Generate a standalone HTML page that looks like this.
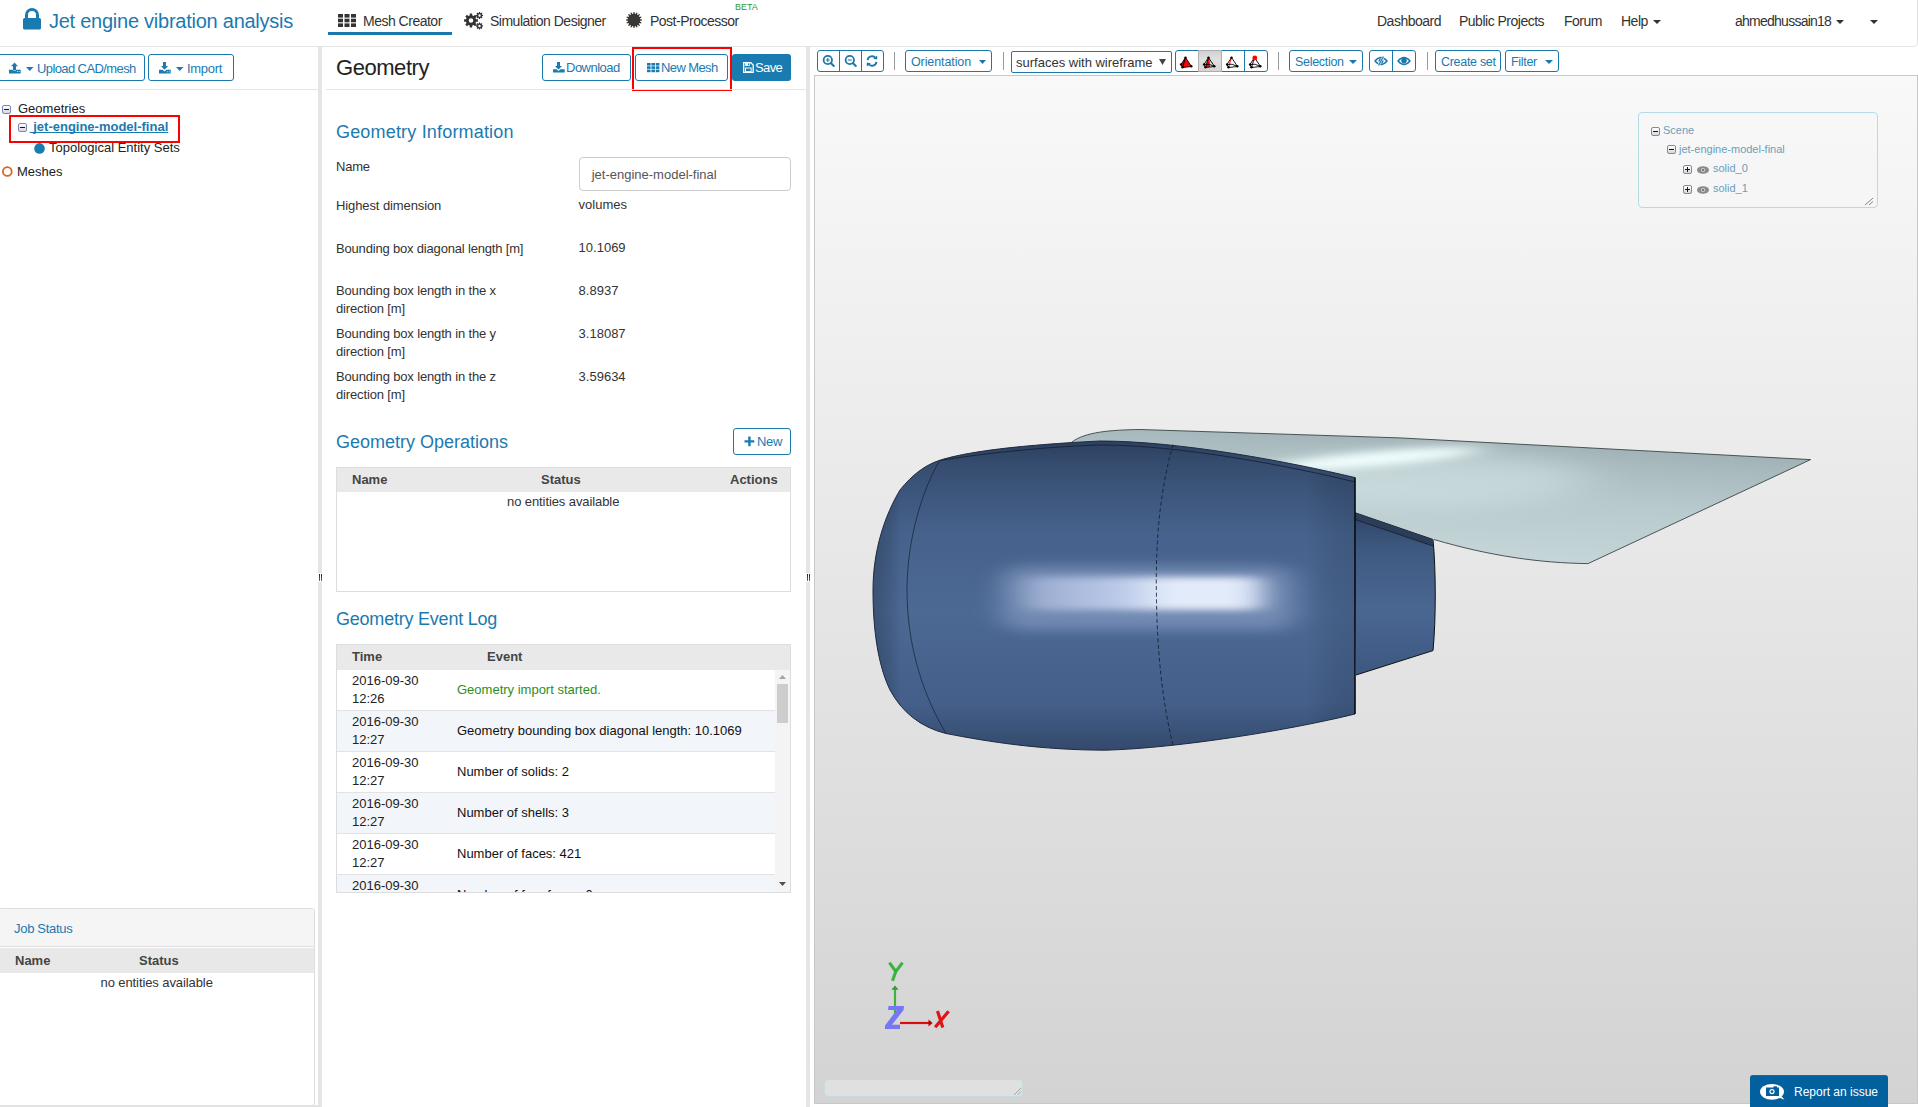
<!DOCTYPE html>
<html><head><meta charset="utf-8">
<style>
*{box-sizing:border-box;margin:0;padding:0}
html,body{width:1918px;height:1107px;overflow:hidden;background:#fff;font-family:"Liberation Sans",sans-serif;color:#333}
.a{position:absolute}
.t{position:absolute;white-space:nowrap;line-height:1}
.btn{position:absolute;border:1px solid #1b78ad;border-radius:3px;background:#fff}
.blue{color:#1b7ab0}
svg{position:absolute;overflow:visible}
.tb,.tbp{width:9px;height:9px;border:1px solid #7b84c4;border-radius:2px;background:linear-gradient(#fff,#d8d8d8)}
.tb::after,.tbp::after{content:"";position:absolute;left:1px;top:3px;width:5px;height:1px;background:#00c}
.tbp::before{content:"";position:absolute;left:3px;top:1px;width:1px;height:5px;background:#00c}
</style></head><body>

<!-- NAVBAR -->
<div class="a" style="left:-4px;top:-4px;width:1922px;height:51px;border:1px solid #e3e3e3;border-radius:4px;background:#fff"></div>
<svg style="left:23px;top:8px" width="18" height="22" viewBox="0 0 18 22"><path d="M2 10.5V7A7 7 0 0 1 16 7V10.5H13V7A4 4 0 0 0 5 7V10.5Z" fill="#1a7bb0"/><rect x="0" y="10" width="18" height="11.6" rx="1.5" fill="#1a7bb0"/></svg>
<div class="t blue" style="left:49px;top:11px;font-size:20px;letter-spacing:-0.25px;color:#1b7ab0">Jet engine vibration analysis</div>

<!-- app tabs -->
<svg style="left:338px;top:14px" width="18" height="13" viewBox="0 0 18 13"><g fill="#333"><rect x="0" y="0" width="5" height="3.6"/><rect x="6.5" y="0" width="5" height="3.6"/><rect x="13" y="0" width="5" height="3.6"/><rect x="0" y="4.7" width="5" height="3.6"/><rect x="6.5" y="4.7" width="5" height="3.6"/><rect x="13" y="4.7" width="5" height="3.6"/><rect x="0" y="9.4" width="5" height="3.6"/><rect x="6.5" y="9.4" width="5" height="3.6"/><rect x="13" y="9.4" width="5" height="3.6"/></g></svg>
<div class="t" style="left:363px;top:14px;font-size:14px;letter-spacing:-0.5px;color:#333">Mesh Creator</div>
<div class="a" style="left:328px;top:32px;width:124px;height:3px;background:#1b78ad"></div>

<svg style="left:464px;top:12px" width="20" height="17" viewBox="0 0 20 17"><path fill-rule="evenodd" fill="#333" d="M12.03 7.17 L13.91 7.35 L13.91 9.65 L12.03 9.83 L11.50 11.11 L12.70 12.57 L11.07 14.20 L9.61 13.00 L8.33 13.53 L8.15 15.41 L5.85 15.41 L5.67 13.53 L4.39 13.00 L2.93 14.20 L1.30 12.57 L2.50 11.11 L1.97 9.83 L0.09 9.65 L0.09 7.35 L1.97 7.17 L2.50 5.89 L1.30 4.43 L2.93 2.80 L4.39 4.00 L5.67 3.47 L5.85 1.59 L8.15 1.59 L8.33 3.47 L9.61 4.00 L11.07 2.80 L12.70 4.43 L11.50 5.89Z M9.30 8.50 A2.3 2.3 0 1 0 4.70 8.50 A2.3 2.3 0 1 0 9.30 8.50Z M18.01 2.83 L19.05 2.91 L19.05 4.09 L18.01 4.17 L17.75 4.81 L18.43 5.59 L17.59 6.43 L16.81 5.75 L16.17 6.01 L16.09 7.05 L14.91 7.05 L14.83 6.01 L14.19 5.75 L13.41 6.43 L12.57 5.59 L13.25 4.81 L12.99 4.17 L11.95 4.09 L11.95 2.91 L12.99 2.83 L13.25 2.19 L12.57 1.41 L13.41 0.57 L14.19 1.25 L14.83 0.99 L14.91 -0.05 L16.09 -0.05 L16.17 0.99 L16.81 1.25 L17.59 0.57 L18.43 1.41 L17.75 2.19Z M16.70 3.50 A1.2 1.2 0 1 0 14.30 3.50 A1.2 1.2 0 1 0 16.70 3.50Z M18.01 13.33 L19.05 13.41 L19.05 14.59 L18.01 14.67 L17.75 15.31 L18.43 16.09 L17.59 16.93 L16.81 16.25 L16.17 16.51 L16.09 17.55 L14.91 17.55 L14.83 16.51 L14.19 16.25 L13.41 16.93 L12.57 16.09 L13.25 15.31 L12.99 14.67 L11.95 14.59 L11.95 13.41 L12.99 13.33 L13.25 12.69 L12.57 11.91 L13.41 11.07 L14.19 11.75 L14.83 11.49 L14.91 10.45 L16.09 10.45 L16.17 11.49 L16.81 11.75 L17.59 11.07 L18.43 11.91 L17.75 12.69Z M16.70 14.00 A1.2 1.2 0 1 0 14.30 14.00 A1.2 1.2 0 1 0 16.70 14.00Z"/></svg>
<div class="t" style="left:490px;top:14px;font-size:14px;letter-spacing:-0.5px;color:#333">Simulation Designer</div>

<svg style="left:626px;top:12px" width="17" height="17" viewBox="0 0 17 17"><path fill="#3a3633" d="M14.25 7.25 L15.98 7.42 L15.98 8.58 L14.25 8.75 L14.07 9.70 L15.59 10.52 L15.15 11.59 L13.49 11.09 L12.96 11.89 L14.05 13.23 L13.23 14.05 L11.89 12.96 L11.09 13.49 L11.59 15.15 L10.52 15.59 L9.70 14.07 L8.75 14.25 L8.58 15.98 L7.42 15.98 L7.25 14.25 L6.30 14.07 L5.48 15.59 L4.41 15.15 L4.91 13.49 L4.11 12.96 L2.77 14.05 L1.95 13.23 L3.04 11.89 L2.51 11.09 L0.85 11.59 L0.41 10.52 L1.93 9.70 L1.75 8.75 L0.02 8.58 L0.02 7.42 L1.75 7.25 L1.93 6.30 L0.41 5.48 L0.85 4.41 L2.51 4.91 L3.04 4.11 L1.95 2.77 L2.77 1.95 L4.11 3.04 L4.91 2.51 L4.41 0.85 L5.48 0.41 L6.30 1.93 L7.25 1.75 L7.42 0.02 L8.58 0.02 L8.75 1.75 L9.70 1.93 L10.52 0.41 L11.59 0.85 L11.09 2.51 L11.89 3.04 L13.23 1.95 L14.05 2.77 L12.96 4.11 L13.49 4.91 L15.15 4.41 L15.59 5.48 L14.07 6.30Z"/></svg>
<div class="t" style="left:650px;top:14px;font-size:14px;letter-spacing:-0.5px;color:#333">Post-Processor</div>
<div class="t" style="left:735px;top:3px;font-size:9px;color:#2e9a2e">BETA</div>

<div class="t" style="left:1377px;top:14px;font-size:14px;letter-spacing:-0.5px">Dashboard</div>
<div class="t" style="left:1459px;top:14px;font-size:14px;letter-spacing:-0.5px">Public Projects</div>
<div class="t" style="left:1564px;top:14px;font-size:14px;letter-spacing:-0.5px">Forum</div>
<div class="t" style="left:1621px;top:14px;font-size:14px;letter-spacing:-0.5px">Help</div>
<svg style="left:1653px;top:20px" width="8" height="4"><path d="M0 0h8L4 4z" fill="#333"/></svg>
<div class="t" style="left:1735px;top:14px;font-size:14px;letter-spacing:-0.75px">ahmedhussain18</div>
<svg style="left:1836px;top:20px" width="8" height="4"><path d="M0 0h8L4 4z" fill="#333"/></svg>
<svg style="left:1870px;top:20px" width="8" height="4"><path d="M0 0h8L4 4z" fill="#333"/></svg>

<!-- SPLITTERS -->
<div class="a" style="left:318px;top:47px;width:4px;height:1060px;background:#e5e5e5"></div>
<div class="a" style="left:806px;top:47px;width:4px;height:1060px;background:#e5e5e5"></div>

<div class="a" style="left:318px;top:573px;width:4px;height:9px;background:#fff"></div>
<div class="a" style="left:319px;top:574px;width:1px;height:7px;background:linear-gradient(#222,#666)"></div>
<div class="a" style="left:321px;top:574px;width:1px;height:7px;background:linear-gradient(#222,#666)"></div>
<div class="a" style="left:806px;top:573px;width:4px;height:9px;background:#fff"></div>
<div class="a" style="left:807px;top:574px;width:1px;height:7px;background:linear-gradient(#222,#666)"></div>
<div class="a" style="left:809px;top:574px;width:1px;height:7px;background:linear-gradient(#222,#666)"></div>
<!-- LEFT PANEL -->
<div class="btn" style="left:-3px;top:54px;width:148px;height:27px"></div>
<div class="t blue" style="left:37px;top:61.5px;font-size:13px;letter-spacing:-0.6px">Upload CAD/mesh</div>
<div class="btn" style="left:148px;top:54px;width:86px;height:27px"></div>
<div class="t blue" style="left:187px;top:61.5px;font-size:13px;letter-spacing:-0.3px">Import</div>
<div class="a" style="left:0;top:89px;width:318px;height:1px;background:#e6e6e6"></div>

<div class="t" style="left:18px;top:102px;font-size:13px;color:#222">Geometries</div>
<div class="t" style="left:29.6px;top:120px;font-size:13px;font-weight:bold;color:#1b7ab0;text-decoration:underline;text-decoration-skip-ink:none">&nbsp;jet-engine-model-final</div>
<div class="t" style="left:49px;top:140.7px;font-size:13px;color:#222">Topological Entity Sets</div>
<div class="t" style="left:17px;top:165px;font-size:13px;color:#222">Meshes</div>
<div class="a" style="left:9px;top:115px;width:171px;height:28px;border:2px solid #ff0000"></div>

<!-- Job status -->
<div class="a" style="left:-2px;top:908px;width:317px;height:198px;border:1px solid #ddd;border-radius:3px;background:#fff"></div>
<div class="a" style="left:0;top:1105px;width:318px;height:2px;background:#e2e2e2"></div>
<div class="a" style="left:-1px;top:909px;width:315px;height:38px;background:#f5f5f5;border-bottom:1px solid #ddd"></div>
<div class="t blue" style="left:14px;top:922px;font-size:13px;letter-spacing:-0.3px">Job Status</div>
<div class="a" style="left:0;top:948px;width:314px;height:25px;background:#e8e8e8"></div>
<div class="t" style="left:15px;top:953.5px;font-size:13px;font-weight:bold;color:#444">Name</div>
<div class="t" style="left:139px;top:953.5px;font-size:13px;font-weight:bold;color:#444">Status</div>
<div class="t" style="left:100.5px;top:975.6px;font-size:13px;color:#333;letter-spacing:-0.09px">no entities available</div>

<!-- MIDDLE PANEL -->
<div class="t" style="left:336px;top:57px;font-size:22px;letter-spacing:-0.45px;color:#222">Geometry</div>
<div class="btn" style="left:542px;top:54px;width:89px;height:27px"></div>
<div class="t blue" style="left:566px;top:61px;font-size:13px;letter-spacing:-0.5px">Download</div>
<div class="btn" style="left:635px;top:54px;width:93px;height:27px"></div>
<div class="t blue" style="left:661px;top:61px;font-size:13px;letter-spacing:-0.6px">New Mesh</div>
<div class="a" style="left:632px;top:47px;width:100px;height:44px;border:2px solid #ff0000"></div>
<div class="a" style="left:732px;top:54px;width:59px;height:27px;background:#1a7bb0;border-radius:3px"></div>
<div class="t" style="left:755px;top:61px;font-size:13px;letter-spacing:-0.6px;color:#fff">Save</div>
<div class="a" style="left:326px;top:89px;width:480px;height:1px;background:#e6e6e6"></div>

<div class="t blue" style="left:336px;top:123px;font-size:18px;letter-spacing:0.18px">Geometry Information</div>
<div class="t" style="left:336px;top:160.3px;font-size:13px;letter-spacing:-0.2px">Name</div>
<div class="a" style="left:579px;top:157px;width:212px;height:34px;border:1px solid #ccc;border-radius:4px"></div>
<div class="t" style="left:591.7px;top:168px;font-size:13px;color:#555">jet-engine-model-final</div>
<div class="t" style="left:336px;top:199px;font-size:13px;letter-spacing:-0.1px">Highest dimension</div>
<div class="t" style="left:578.6px;top:198px;font-size:13px">volumes</div>
<div class="t" style="left:336px;top:241.6px;font-size:13px;letter-spacing:-0.18px">Bounding box diagonal length [m]</div>
<div class="t" style="left:578.6px;top:241px;font-size:13px">10.1069</div>
<div class="t" style="left:336px;top:282.2px;font-size:13px;line-height:17.8px;white-space:normal;width:200px;letter-spacing:-0.15px">Bounding box length in the x<br>direction [m]</div>
<div class="t" style="left:578.6px;top:284px;font-size:13px">8.8937</div>
<div class="t" style="left:336px;top:325.2px;font-size:13px;line-height:17.8px;white-space:normal;width:200px;letter-spacing:-0.15px">Bounding box length in the y<br>direction [m]</div>
<div class="t" style="left:578.6px;top:327px;font-size:13px">3.18087</div>
<div class="t" style="left:336px;top:368.2px;font-size:13px;line-height:17.8px;white-space:normal;width:200px;letter-spacing:-0.15px">Bounding box length in the z<br>direction [m]</div>
<div class="t" style="left:578.6px;top:370px;font-size:13px">3.59634</div>

<div class="t blue" style="left:336px;top:432.7px;font-size:18px">Geometry Operations</div>
<div class="btn" style="left:733px;top:428px;width:58px;height:27px"></div>
<div class="t blue" style="left:757px;top:435px;font-size:13px;letter-spacing:-0.3px">New</div>
<div class="a" style="left:336px;top:467px;width:455px;height:125px;border:1px solid #ddd"></div>
<div class="a" style="left:337px;top:468px;width:453px;height:24px;background:#e9e9e9"></div>
<div class="t" style="left:352px;top:472.9px;font-size:13px;font-weight:bold;color:#444">Name</div>
<div class="t" style="left:541px;top:472.9px;font-size:13px;font-weight:bold;color:#444">Status</div>
<div class="t" style="left:730px;top:472.9px;font-size:13px;font-weight:bold;color:#444">Actions</div>
<div class="t" style="left:507px;top:495px;font-size:13px;letter-spacing:-0.09px">no entities available</div>

<div class="t blue" style="left:336px;top:610px;font-size:18px;letter-spacing:-0.22px">Geometry Event Log</div>
<div class="a" style="left:336px;top:644px;width:455px;height:249px;border:1px solid #ddd"></div>
<div class="a" style="left:337px;top:645px;width:453px;height:25px;background:#e9e9e9"></div>
<div class="t" style="left:352px;top:650px;font-size:13px;font-weight:bold;color:#444">Time</div>
<div class="t" style="left:487px;top:650px;font-size:13px;font-weight:bold;color:#444">Event</div>

<div class="a" style="left:337px;top:670px;width:438px;height:222px;overflow:hidden">
<div class="a" style="left:0;top:0px;width:438px;height:40px;background:#fff;border-top:0"></div>
<div class="t" style="left:15px;top:4.3px;font-size:13px;color:#222">2016-09-30</div>
<div class="t" style="left:15px;top:22.0px;font-size:13px;color:#222">12:26</div>
<div class="t" style="left:120px;top:13.0px;font-size:13px;color:#2a8f22">Geometry import started.</div>
<div class="a" style="left:0;top:40px;width:438px;height:41px;background:#f2f5f9;border-top:1px solid #e3e3e3"></div>
<div class="t" style="left:15px;top:45.3px;font-size:13px;color:#222">2016-09-30</div>
<div class="t" style="left:15px;top:63.0px;font-size:13px;color:#222">12:27</div>
<div class="t" style="left:120px;top:54.0px;font-size:13px;color:#111">Geometry bounding box diagonal length: 10.1069</div>
<div class="a" style="left:0;top:81px;width:438px;height:41px;background:#fff;border-top:1px solid #e3e3e3"></div>
<div class="t" style="left:15px;top:86.3px;font-size:13px;color:#222">2016-09-30</div>
<div class="t" style="left:15px;top:104.0px;font-size:13px;color:#222">12:27</div>
<div class="t" style="left:120px;top:95.0px;font-size:13px;color:#111">Number of solids: 2</div>
<div class="a" style="left:0;top:122px;width:438px;height:41px;background:#f2f5f9;border-top:1px solid #e3e3e3"></div>
<div class="t" style="left:15px;top:127.3px;font-size:13px;color:#222">2016-09-30</div>
<div class="t" style="left:15px;top:145.0px;font-size:13px;color:#222">12:27</div>
<div class="t" style="left:120px;top:136.0px;font-size:13px;color:#111">Number of shells: 3</div>
<div class="a" style="left:0;top:163px;width:438px;height:41px;background:#fff;border-top:1px solid #e3e3e3"></div>
<div class="t" style="left:15px;top:168.3px;font-size:13px;color:#222">2016-09-30</div>
<div class="t" style="left:15px;top:186.0px;font-size:13px;color:#222">12:27</div>
<div class="t" style="left:120px;top:177.0px;font-size:13px;color:#111">Number of faces: 421</div>
<div class="a" style="left:0;top:204px;width:438px;height:41px;background:#f2f5f9;border-top:1px solid #e3e3e3"></div>
<div class="t" style="left:15px;top:209.3px;font-size:13px;color:#222">2016-09-30</div>
<div class="t" style="left:15px;top:227.0px;font-size:13px;color:#222">12:27</div>
<div class="t" style="left:120px;top:218.0px;font-size:13px;color:#111">Number of free faces: 0</div>
</div>
<div class="a" style="left:775px;top:670px;width:15px;height:222px;background:rgba(235,235,235,0.55)"></div>
<div class="a" style="left:777px;top:684px;width:11px;height:39px;background:rgba(150,150,150,0.42)"></div>
<svg style="left:779px;top:675px" width="7" height="4"><path d="M0 4L3.5 0L7 4z" fill="#a3a3a3"/></svg>
<svg style="left:779px;top:882px" width="7" height="4"><path d="M0 0L7 0L3.5 4z" fill="#505050"/></svg>

<!-- tree icons -->
<div class="a tb" style="left:2px;top:105px"></div>
<div class="a tb" style="left:18px;top:123px"></div>
<svg style="left:34px;top:142.5px" width="11" height="11"><circle cx="5.5" cy="5.4" r="5.3" fill="#1a7bb1"/></svg>
<svg style="left:2px;top:166px" width="11" height="11"><circle cx="5.3" cy="5.5" r="4.4" fill="none" stroke="#e0641e" stroke-width="1.8"/></svg>
<!-- upload/import icons -->
<svg style="left:9px;top:61.5px" width="12" height="12" viewBox="0 0 12 12"><path d="M5.5 0.5L9 4.2H7V8H4V4.2H2z" fill="#1a7bb1"/><path d="M0 7.7H4V8.5H7V7.7H11.7V11.4H0z" fill="#1a7bb1"/><circle cx="8.4" cy="9.6" r="0.5" fill="#fff"/><circle cx="10.2" cy="9.6" r="0.5" fill="#fff"/></svg>
<svg style="left:25.5px;top:67px" width="8" height="4"><path d="M0 0h7.5L3.75 4z" fill="#1a7bb1"/></svg>
<svg style="left:158.5px;top:61.5px" width="12" height="12" viewBox="0 0 12 12"><path d="M4 0H7V4H9L5.5 7.8L2 4H4z" fill="#1a7bb1"/><path d="M0 7.7H3.5L5.5 9.5L7.5 7.7H11.7V11.4H0z" fill="#1a7bb1"/><circle cx="8.4" cy="9.8" r="0.5" fill="#fff"/><circle cx="10.2" cy="9.8" r="0.5" fill="#fff"/></svg>
<svg style="left:175.5px;top:67px" width="8" height="4"><path d="M0 0h7.5L3.75 4z" fill="#1a7bb1"/></svg>
<!-- middle header icons -->
<svg style="left:552.5px;top:61.5px" width="12" height="11" viewBox="0 0 12 11"><path d="M4 0H7V4H9L5.5 7.6L2 4H4z" fill="#1a7bb1"/><path d="M0 7.3H3.5L5.5 9L7.5 7.3H11.7V10.6H0z" fill="#1a7bb1"/></svg>
<svg style="left:646.5px;top:62.5px" width="13" height="10" viewBox="0 0 13 10"><g fill="#1a7bb1"><rect x="0" y="0" width="3.6" height="2.6"/><rect x="4.4" y="0" width="3.6" height="2.6"/><rect x="8.8" y="0" width="3.6" height="2.6"/><rect x="0" y="3.3" width="3.6" height="2.6"/><rect x="4.4" y="3.3" width="3.6" height="2.6"/><rect x="8.8" y="3.3" width="3.6" height="2.6"/><rect x="0" y="6.6" width="3.6" height="2.6"/><rect x="4.4" y="6.6" width="3.6" height="2.6"/><rect x="8.8" y="6.6" width="3.6" height="2.6"/></g></svg>
<svg style="left:742.5px;top:62px" width="11" height="11" viewBox="0 0 11 11"><path d="M0.7 0.7H7.8L10.2 3.1V10.3H0.7z" fill="none" stroke="#fff" stroke-width="1.3"/><rect x="2.2" y="1" width="4.6" height="3" fill="#fff"/><rect x="5" y="1.5" width="1.1" height="1.8" fill="#1a7bb1"/><rect x="2.5" y="6" width="5.6" height="3.7" fill="none" stroke="#fff" stroke-width="1"/></svg>
<svg style="left:744px;top:435.5px" width="11" height="11" viewBox="0 0 11 11"><path d="M4.2 0.5H6.6V4.2H10.3V6.6H6.6V10.3H4.2V6.6H0.5V4.2H4.2z" fill="#1a7bb1"/></svg>

<!-- VIEWER -->
<div class="a" style="left:814px;top:75px;width:1104px;height:1029px;border:1px solid #c8c8c8;background:linear-gradient(#f9f9f9,#d3d3d3)"></div>
<svg style="left:0;top:0" width="1918" height="1107" viewBox="0 0 1918 1107">
<defs>
<linearGradient id="wingG" x1="1420" y1="436" x2="1412" y2="562" gradientUnits="userSpaceOnUse">
<stop offset="0" stop-color="#a1b3b6"/><stop offset="0.12" stop-color="#a8babd"/><stop offset="0.45" stop-color="#b8cacd"/><stop offset="1" stop-color="#c7d7da"/></linearGradient>
<filter id="wbl" x="-50%" y="-300%" width="200%" height="700%"><feGaussianBlur stdDeviation="16 4"/></filter>
<filter id="wbl2" x="-50%" y="-300%" width="200%" height="700%"><feGaussianBlur stdDeviation="30 10"/></filter>
<clipPath id="wingClip"><path d="M1072 442 C1085 432 1110 430 1140 429.5 L1400 437.9 L1810.6 459.6 L1588 563.6 C1540 563 1490 556 1434 539.5 L1355 512.4 L1300 470 Z"/></clipPath>
<linearGradient id="nacG" x1="0" y1="441" x2="0" y2="750" gradientUnits="userSpaceOnUse">
<stop offset="0" stop-color="#2c405f"/><stop offset="0.08" stop-color="#364d70"/><stop offset="0.3" stop-color="#46628c"/><stop offset="0.55" stop-color="#4c6994"/><stop offset="0.85" stop-color="#445f89"/><stop offset="1" stop-color="#34496c"/></linearGradient>
<linearGradient id="nacH" x1="872" y1="0" x2="1355" y2="0" gradientUnits="userSpaceOnUse">
<stop offset="0" stop-color="#1e2c44" stop-opacity="0.35"/><stop offset="0.06" stop-color="#000" stop-opacity="0"/><stop offset="0.9" stop-color="#000" stop-opacity="0"/><stop offset="1" stop-color="#1e2c44" stop-opacity="0.2"/></linearGradient>
<linearGradient id="exG" x1="0" y1="512" x2="0" y2="675" gradientUnits="userSpaceOnUse">
<stop offset="0" stop-color="#2f4465"/><stop offset="0.25" stop-color="#3f5a82"/><stop offset="0.6" stop-color="#4a6792"/><stop offset="1" stop-color="#3d5780"/></linearGradient>
<filter id="bl" x="-50%" y="-200%" width="200%" height="500%"><feGaussianBlur stdDeviation="14 6"/></filter>
<linearGradient id="hlG" x1="1025" y1="0" x2="1265" y2="0" gradientUnits="userSpaceOnUse"><stop offset="0" stop-color="#a9b9d9" stop-opacity="0.5"/><stop offset="0.12" stop-color="#a3b3d6"/><stop offset="0.4" stop-color="#bccae8"/><stop offset="0.6" stop-color="#e3ebfa"/><stop offset="0.9" stop-color="#e3ebfa"/><stop offset="1" stop-color="#d2dcf2" stop-opacity="0.6"/></linearGradient>
<filter id="bl2" x="-50%" y="-200%" width="200%" height="500%"><feGaussianBlur stdDeviation="11 3.5"/></filter>
<clipPath id="nacClip"><path d="M873 590 C873 550 885 515 900 490 C912 475 925 465 940 460.2 C960 454 1000 446 1100 441 C1180 441 1290 462 1355 477.6 L1355 714 C1290 730 1180 748 1105.7 750.2 C1040 750 990 742 946 733.5 C920 727 902 712 890 690 C878 665 873 630 873 590Z"/></clipPath>
</defs>
<!-- wing -->
<path d="M1072 442 C1085 432 1110 430 1140 429.5 L1400 437.9 L1810.6 459.6 L1588 563.6 C1540 563 1490 556 1434 539.5 L1355 512.4 L1300 470 Z" fill="url(#wingG)"/>
<g clip-path="url(#wingClip)">
<ellipse cx="1420" cy="480" rx="170" ry="28" fill="#d5e5e7" opacity="0.55" filter="url(#wbl2)"/>
<ellipse cx="1375" cy="459" rx="105" ry="7" transform="rotate(-5 1375 459)" fill="#f2ffff" filter="url(#wbl)"/>
</g>
<path d="M1072 442 C1085 432 1110 430 1140 429.5 L1400 437.9 L1810.6 459.6 L1588 563.6 C1540 563 1490 556 1434 539.5" fill="none" stroke="#3a4446" stroke-width="0.9"/>
<!-- exhaust -->
<path d="M1354 512.4 L1433 539.5 C1436 570 1436 620 1433 650.6 L1356 675 Z" fill="url(#exG)"/>
<path d="M1354 512.4 L1433 539.5 C1436 570 1436 620 1433 650.6 L1356 675" fill="none" stroke="#111" stroke-width="1"/>
<path d="M1355 512.4 L1433 539.5 L1433 546 L1355 519.5Z" fill="#2c3d5a"/><path d="M1355 519.5 L1433 546" stroke="#151d2c" stroke-width="0.8"/>
<!-- nacelle -->
<path d="M873 590 C873 550 885 515 900 490 C912 475 925 465 940 460.2 C960 454 1000 446 1100 441 C1180 441 1290 462 1355 477.6 L1355 714 C1290 730 1180 748 1105.7 750.2 C1040 750 990 742 946 733.5 C920 727 902 712 890 690 C878 665 873 630 873 590Z" fill="url(#nacG)"/>
<g clip-path="url(#nacClip)">
<rect x="860" y="430" width="500" height="330" fill="url(#nacH)"/>
<rect x="1000" y="566" width="295" height="64" rx="20" fill="#92a6cc" opacity="0.55" filter="url(#bl)"/>
<rect x="1022" y="577" width="245" height="33" rx="10" fill="url(#hlG)" filter="url(#bl2)"/>
<path d="M940 460.5 C990 452 1060 446 1100 445 C1180 445 1290 466 1355 482" fill="none" stroke="#1a2333" stroke-width="0.9"/>
</g>
<path d="M873 590 C873 550 885 515 900 490 C912 475 925 465 940 460.2 C960 454 1000 446 1100 441 C1180 441 1290 462 1355 477.6 L1355 714 C1290 730 1180 748 1105.7 750.2 C1040 750 990 742 946 733.5 C920 727 902 712 890 690 C878 665 873 630 873 590Z" fill="none" stroke="#1d2a3f" stroke-width="1"/>
<path d="M1355 477.6 L1355 714" stroke="#000" stroke-width="1.2"/>
<!-- inner lip line -->
<path d="M940 460 C922 490 907 540 907 590 C907 640 920 690 946 733.5" fill="none" stroke="#121a28" stroke-width="0.65"/>
<!-- mid dashed line -->
<path d="M1173 444.6 C1160 490 1155.5 540 1156.4 594 C1157 650 1162 700 1173 745.5" fill="none" stroke="#121a28" stroke-width="0.8" stroke-dasharray="4 2.5"/>
</svg>


<!-- viewer toolbar -->
<div class="btn" style="left:817px;top:50px;width:67px;height:22px"></div>
<div class="a" style="left:839px;top:50px;width:1px;height:22px;background:#1b78ad"></div>
<div class="a" style="left:861px;top:50px;width:1px;height:22px;background:#1b78ad"></div>
<svg style="left:822px;top:54px" width="13" height="14" viewBox="0 0 13 14"><circle cx="5.8" cy="6" r="4.2" fill="none" stroke="#1b78ad" stroke-width="1.8"/><path d="M8.8 9l3 3" stroke="#1b78ad" stroke-width="2" stroke-linecap="round"/><path d="M3.8 6h4M5.8 4v4" stroke="#1b78ad" stroke-width="1.1"/></svg>
<svg style="left:844px;top:54px" width="13" height="14" viewBox="0 0 13 14"><circle cx="5.8" cy="6" r="4.2" fill="none" stroke="#1b78ad" stroke-width="1.8"/><path d="M8.8 9l3 3" stroke="#1b78ad" stroke-width="2" stroke-linecap="round"/><path d="M3.8 6h4" stroke="#1b78ad" stroke-width="1.1"/></svg>
<svg style="left:866px;top:55px" width="12" height="12" viewBox="0 0 12 12"><path d="M1.6 5.2A4.5 4.5 0 0 1 9.6 3" fill="none" stroke="#1b78ad" stroke-width="1.9"/><path d="M7.2 3.8L11.2 0.6V4.6z" fill="#1b78ad"/><path d="M10.4 6.8A4.5 4.5 0 0 1 2.4 9" fill="none" stroke="#1b78ad" stroke-width="1.9"/><path d="M4.8 8.2L0.8 11.4V7.4z" fill="#1b78ad"/></svg>
<div class="a" style="left:894px;top:52px;width:1px;height:18px;background:#9a9a9a"></div>

<div class="btn" style="left:905px;top:50px;width:87px;height:22px"></div>
<div class="t blue" style="left:911px;top:56px;font-size:12.5px;letter-spacing:-0.1px">Orientation</div>
<svg style="left:979px;top:60px" width="7" height="4"><path d="M0 0h7L3.5 4z" fill="#1b78ad"/></svg>
<div class="a" style="left:1003px;top:52px;width:1px;height:18px;background:#9a9a9a"></div>

<div class="a" style="left:1011px;top:51px;width:161px;height:22px;border:1px solid #1b78ad;border-radius:2px;background:#fff"></div>
<div class="t" style="left:1016px;top:56px;font-size:13px;color:#333">surfaces with wireframe</div>
<svg style="left:1159px;top:59px" width="7" height="6"><path d="M0 0h7L3.5 6z" fill="#444"/></svg>

<div class="btn" style="left:1175px;top:50px;width:93px;height:22px"></div>
<div class="a" style="left:1198px;top:50px;width:24px;height:22px;background:linear-gradient(#d0d0d0,#e0e0e0 40%,#d4d4d4);border:1px solid #adadad"></div>
<div class="a" style="left:1244px;top:50px;width:1px;height:22px;background:#1b78ad"></div>
<svg style="left:1180px;top:55.8px" width="14" height="14" viewBox="0 0 14 14"><path d="M5.5 1.5L1 8.5L2.5 11.5L11.5 10.5z" fill="#f00"/><path d="M5.5 1.5L1 8.5L2.5 11.5L11.5 10.5z M5.5 1.5L2.5 11.5" fill="none" stroke="#000" stroke-width="0.9"/><circle cx="5.5" cy="1.6" r="1.2"/><circle cx="1.1" cy="8.5" r="1.2"/><circle cx="2.5" cy="11.3" r="1.2"/><circle cx="11.3" cy="10.3" r="1.2"/></svg>
<svg style="left:1203px;top:55.8px" width="14" height="14" viewBox="0 0 14 14"><path d="M5.5 1.5L2.5 11.5L7 11L6.5 1.8z" fill="#f00"/><path d="M5.5 1.5L1 8.5L2.5 11.5L11.5 10.5z M5.5 1.5L2.5 11.5 M1 8.5Q6 7 11.5 10.5" fill="none" stroke="#000" stroke-width="0.9"/><circle cx="5.5" cy="1.6" r="1.2"/><circle cx="1.1" cy="8.5" r="1.2"/><circle cx="2.5" cy="11.3" r="1.2"/><circle cx="11.3" cy="10.3" r="1.2"/></svg>
<svg style="left:1226px;top:55.8px" width="14" height="14" viewBox="0 0 14 14"><path d="M5.5 1.5L2.5 11.5" stroke="#f44" stroke-width="1.2"/><path d="M5.5 1.5L1 8.5L2.5 11.5L11.5 10.5z M1 8.5Q6 7 11.5 10.5" fill="none" stroke="#000" stroke-width="0.9"/><circle cx="5.5" cy="1.6" r="1.2"/><circle cx="1.1" cy="8.5" r="1.2"/><circle cx="2.5" cy="11.3" r="1.2"/><circle cx="11.3" cy="10.3" r="1.2"/></svg>
<svg style="left:1249px;top:55.8px" width="14" height="14" viewBox="0 0 14 14"><path d="M5.5 1.5L1 8.5L2.5 11.5L11.5 10.5z M1 8.5Q6 7 11.5 10.5 M5.5 1.5L2.5 11.5" fill="none" stroke="#000" stroke-width="0.9"/><circle cx="1.1" cy="8.5" r="1.2"/><circle cx="2.5" cy="11.3" r="1.2"/><circle cx="11.3" cy="10.3" r="1.2"/><circle cx="5.8" cy="2" r="2.4" fill="#f00"/></svg>
<div class="a" style="left:1278px;top:52px;width:1px;height:18px;background:#9a9a9a"></div>

<div class="btn" style="left:1289px;top:50px;width:74px;height:22px"></div>
<div class="t blue" style="left:1295px;top:56px;font-size:12.5px;letter-spacing:-0.3px">Selection</div>
<svg style="left:1349px;top:60px" width="8" height="4"><path d="M0 0h8L4 4z" fill="#1b78ad"/></svg>
<div class="btn" style="left:1369px;top:50px;width:47px;height:22px"></div>
<div class="a" style="left:1392px;top:50px;width:1px;height:22px;background:#1b78ad"></div>
<svg style="left:1374px;top:56px" width="14" height="10" viewBox="0 0 14 10"><path d="M1 5Q7 -2 13 5Q7 12 1 5z" fill="none" stroke="#1b78ad" stroke-width="1.4"/><path d="M7 2.5a2.5 2.5 0 1 0 0.1 0" fill="#1b78ad"/><path d="M9.5 0.5L4.5 9.5" stroke="#fff" stroke-width="2.2"/><path d="M9.5 0.5L4.5 9.5" stroke="#1b78ad" stroke-width="1.2"/></svg>
<svg style="left:1397px;top:56px" width="14" height="10" viewBox="0 0 14 10"><path d="M1 5Q7 -2 13 5Q7 12 1 5z" fill="none" stroke="#1b78ad" stroke-width="1.4"/><circle cx="7" cy="4.6" r="2.8" fill="#1b78ad"/></svg>
<div class="a" style="left:1427px;top:52px;width:1px;height:18px;background:#9a9a9a"></div>
<div class="btn" style="left:1435px;top:50px;width:66px;height:22px"></div>
<div class="t blue" style="left:1441px;top:56px;font-size:12.5px;letter-spacing:-0.3px">Create set</div>
<div class="btn" style="left:1505px;top:50px;width:54px;height:22px"></div>
<div class="t blue" style="left:1511px;top:56px;font-size:12.5px;letter-spacing:-0.3px">Filter</div>
<svg style="left:1545px;top:60px" width="8" height="4"><path d="M0 0h8L4 4z" fill="#1b78ad"/></svg>

<!-- scene tree -->
<div class="a" style="left:1638px;top:112px;width:240px;height:96px;border:1px solid #b5dbe9;border-radius:4px;background:rgba(247,247,247,0.6)"></div>
<svg style="left:1865px;top:198px" width="9" height="7"><path d="M0 7L8 0M4 7L8 3.5" stroke="#777" stroke-width="0.9"/></svg>
<div class="a tb" style="left:1651px;top:127px"></div>
<div class="t" style="left:1663px;top:124.7px;font-size:11px;color:#6c9db9">Scene</div>
<div class="a tb" style="left:1667px;top:145px"></div>
<div class="t" style="left:1679px;top:143.5px;font-size:11px;color:#6c9db9">jet-engine-model-final</div>
<div class="a tbp" style="left:1683px;top:165px"></div>
<svg style="left:1697px;top:165.5px" width="12" height="8" viewBox="0 0 12 8"><ellipse cx="6" cy="4" rx="6" ry="3.8" fill="#8a8a8a"/><circle cx="6" cy="4" r="2.1" fill="#d8d8d8"/><circle cx="6" cy="4" r="1.2" fill="#7a7a7a"/></svg>
<div class="t" style="left:1713px;top:163.4px;font-size:11px;color:#6c9db9">solid_0</div>
<div class="a tbp" style="left:1683px;top:185px"></div>
<svg style="left:1697px;top:185.5px" width="12" height="8" viewBox="0 0 12 8"><ellipse cx="6" cy="4" rx="6" ry="3.8" fill="#8a8a8a"/><circle cx="6" cy="4" r="2.1" fill="#d8d8d8"/><circle cx="6" cy="4" r="1.2" fill="#7a7a7a"/></svg>
<div class="t" style="left:1713px;top:183.4px;font-size:11px;color:#6c9db9">solid_1</div>

<!-- axis triad -->
<svg style="left:880px;top:960px" width="75" height="75" viewBox="0 0 75 75">
<path d="M10.3 3.8 L15.8 11.5 M21.6 3.8 L15.8 11.5 L13 19.3" fill="none" stroke="#3bb43b" stroke-width="3.1" stroke-linecap="square" stroke-linejoin="miter"/>
<path d="M15 53V29" stroke="#3bb43b" stroke-width="2.2"/><path d="M11.4 29.8L15 25.4L18.6 29.8z" fill="#3a9a3a"/>
<path d="M8.5 46 L24 46 L23.6 50 L12 64.8 L20 64.8 L20 69 L4.8 69 L5.2 65.2 L16.8 50 L8 50z" fill="#7676f6"/>
<path d="M20 63H49" stroke="#d80c0c" stroke-width="2.2"/><path d="M48.5 59.6L52.6 63L48.5 66.4z" fill="#b00"/>
<path d="M58 52.5 L62.3 66 M67.6 52.5 L56.2 66" fill="none" stroke="#e01414" stroke-width="3.2" stroke-linecap="square"/>
</svg>

<!-- bottom textarea -->
<div class="a" style="left:824px;top:1079px;width:199px;height:18px;border:1px solid #c7dbe3;border-radius:4px;background:#e0e0e0"></div>
<svg style="left:1014px;top:1088px" width="7" height="7"><path d="M0 7L7 0M3.5 7L7 3.5" stroke="#999" stroke-width="0.8"/></svg>

<!-- report an issue -->
<div class="a" style="left:1750px;top:1075px;width:138px;height:32px;background:#02609f;border-top:1px solid #0a6cb2;border-radius:3px 3px 0 0"></div>
<svg style="left:1758px;top:1082px" width="30" height="20" viewBox="0 0 30 20"><ellipse cx="14" cy="9.8" rx="12" ry="7.9" fill="#fff"/><path d="M19 15L26.5 17.8L22.5 13z" fill="#fff"/><rect x="8" y="5.5" width="13" height="8.5" fill="#02609f"/><rect x="15.5" y="4.3" width="3.5" height="2" fill="#02609f"/><circle cx="14" cy="9.6" r="2.6" fill="#fff"/><circle cx="14" cy="9.6" r="1.4" fill="#02609f"/></svg>
<div class="t" style="left:1794px;top:1085.5px;font-size:12px;color:#fff">Report an issue</div>
</body></html>
